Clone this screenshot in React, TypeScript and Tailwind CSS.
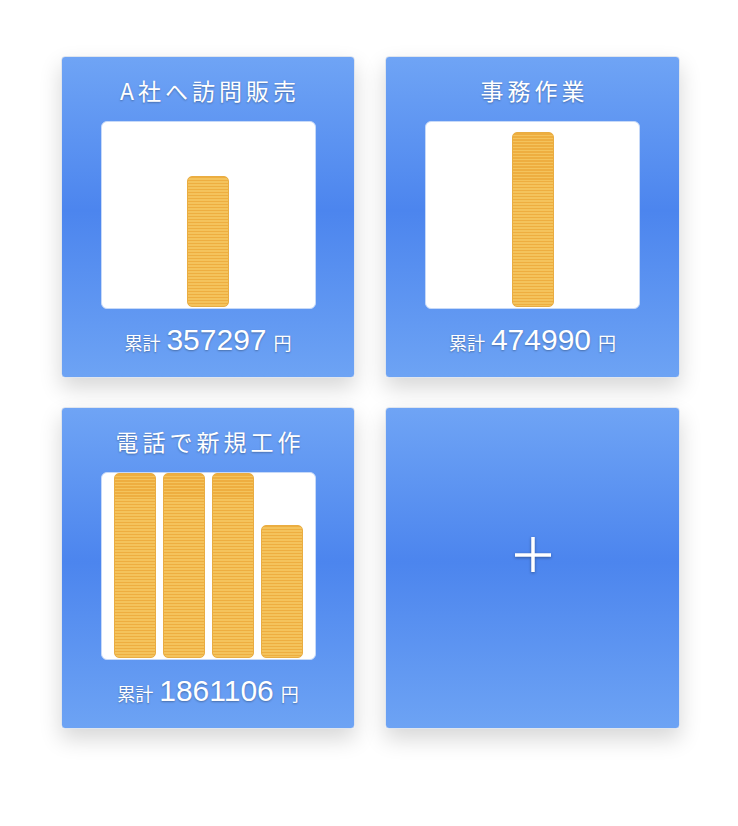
import React from "react";

interface Task {
  title: string;
  total: string;
  bars: number[];
}

const tasks: Task[] = [
  { title: "A社へ訪問販売", total: "357297", bars: [131] },
  { title: "事務作業", total: "474990", bars: [175] },
  { title: "電話で新規工作", total: "1861106", bars: [185, 185, 185, 133] },
];

const cardBase =
  "h-[322px] rounded-[4px] border border-[#dfe5ee] bg-[linear-gradient(180deg,#6fa4f5_0%,#4c85ee_48%,#6da3f4_100%)] shadow-[0_10px_22px_rgba(0,0,0,0.16)]";

function Bar({ height }: { height: number }) {
  return (
    <div
      className="w-[42px] rounded-[5px] border border-[#e9ad42] bg-[repeating-linear-gradient(180deg,#eeae40_0px,#eeae40_1.5px,#f4c35c_1.5px,#f4c35c_3px)]"
      style={{ height }}
    />
  );
}

function TaskCard({ task }: { task: Task }) {
  return (
    <div className={cardBase + " flex flex-col items-center pt-[19px]"}>
      <div className="h-[28px] leading-[28px] text-[23px] tracking-[4px] pl-[4px] text-white [text-shadow:0_1px_2px_rgba(0,0,0,0.3)]">
        {task.title}
      </div>
      <div className="mt-[17px] w-[215px] h-[188px] rounded-[6px] bg-white border-[1.5px] border-[#c6d9f8] flex items-end justify-center gap-[7px] pb-px">
        {task.bars.map((h, i) => (
          <Bar key={i} height={h} />
        ))}
      </div>
      <div className="mt-[16px] h-[30px] flex items-baseline leading-none text-white [text-shadow:0_1px_2px_rgba(0,0,0,0.3)]">
        <span className="text-[18px]">累計</span>
        <span className="text-[30px] ml-[6px] mr-[7px] font-['Liberation_Sans','Noto_Sans_CJK_JP',sans-serif]">
          {task.total}
        </span>
        <span className="text-[18px]">円</span>
      </div>
    </div>
  );
}

function AddCard() {
  return (
    <div className={cardBase + " flex items-center justify-center"}>
      <svg width="40" height="40" viewBox="0 0 40 40" className="mb-[27px] [filter:drop-shadow(0_1px_1.5px_rgba(0,0,0,0.35))]">
        <line x1="2" y1="20" x2="38" y2="20" stroke="white" strokeWidth="3.5" />
        <line x1="20" y1="2" x2="20" y2="37" stroke="white" strokeWidth="3.5" />
      </svg>
    </div>
  );
}

export default function App() {
  return (
    <div className="w-[738px] h-[826px] bg-white pt-[56px] pl-[61px] font-['Noto_Sans_CJK_JP','Liberation_Sans',sans-serif]">
      <div className="grid grid-cols-[294px_295px] gap-x-[30px] gap-y-[29px]">
        {tasks.map((t) => (
          <TaskCard key={t.title} task={t} />
        ))}
        <AddCard />
      </div>
    </div>
  );
}
